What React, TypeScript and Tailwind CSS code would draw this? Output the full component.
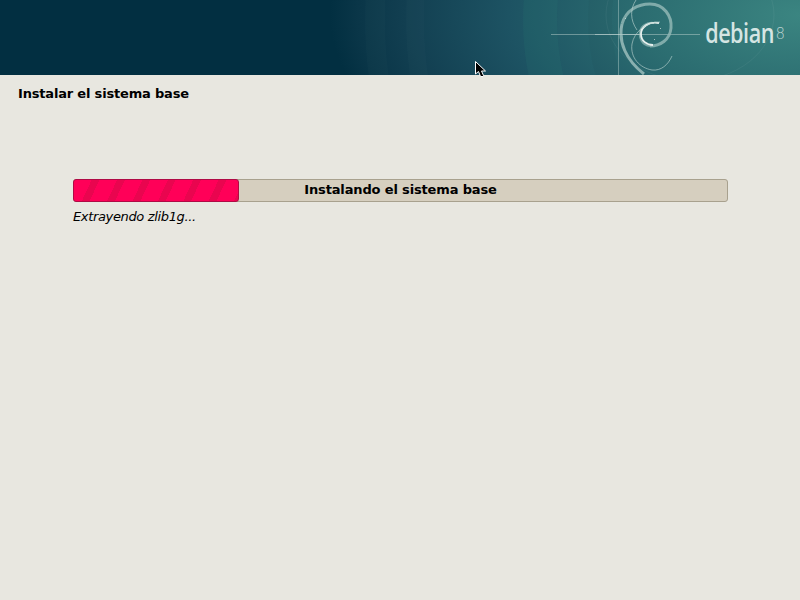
import React from 'react';

const BannerArt = () => (
  <svg className="absolute inset-0 w-[800px] h-[75px]" viewBox="0 0 800 75" fill="none">
    {/* faint rings behind the swirl */}
    <circle cx="800" cy="20" r="425" stroke="#ffffff" strokeOpacity="0.015" strokeWidth="20" />
    <circle cx="800" cy="20" r="385" stroke="#ffffff" strokeOpacity="0.015" strokeWidth="18" />
    <circle cx="800" cy="20" r="260" stroke="#2f8f80" strokeOpacity="0.1" strokeWidth="34" />
    <circle cx="800" cy="20" r="200" stroke="#000000" strokeOpacity="0.025" strokeWidth="24" />
    <ellipse cx="690" cy="15" rx="84" ry="66" stroke="#ffffff" strokeOpacity="0.05" />
    {/* crosshair */}
    <path d="M551 34.5H700" stroke="#c9dcd8" strokeOpacity="0.45" />
    <path d="M595 34.5H640" stroke="#e4eeeb" strokeOpacity="0.4" />
    <path d="M618.5 0V75" stroke="#c9dcd8" strokeOpacity="0.4" />
    {/* swirl */}
    <path d="M622 24C626 10 638 4 650 4C664 4 672 16 671 28C670 40 660 46 650 46" stroke="#8fb6b4" strokeOpacity="0.85" strokeWidth="3" />
    <path d="M622 24C618 42 626 60 644 74" stroke="#a9c8c5" strokeOpacity="0.75" strokeWidth="3" />
    <path d="M650 46C642 45 639 38 640 32C641 26 647 22 654 23" stroke="#a9c8c5" strokeOpacity="0.6" strokeWidth="2" />
    <path d="M659 23C649 21 641 27 641 34C641 41 647 45 653 45" stroke="#e8f1ee" strokeWidth="1.8" />
    <path d="M636 0C630 9 630 20 637 30" stroke="#b5cfcc" strokeOpacity="0.65" />
    <path d="M660 22C646 22 634 32 632 44C630 58 640 68 652 70C661 71 668 65 672 56" stroke="#b5cfcc" strokeOpacity="0.65" />
    <path d="M660 28L661 29M654 39L655 40M625 18L626 19" stroke="#d8e6e3" strokeOpacity="0.7" />
  </svg>
);

const Cursor = () => (
  <svg className="absolute left-[475px] top-[61px]" width="12" height="17" viewBox="0 0 12 17">
    <path d="M0.5 0.5V13L3.5 10.5L5.5 15.5H8L8.5 14.5L6.5 10H10.5Z" fill="#000000" stroke="#ffffff" />
  </svg>
);

export default function App() {
  return (
    <div className="relative w-[800px] h-[600px] overflow-hidden bg-[#e8e7e0] font-['DejaVu_Sans',sans-serif] text-[13px] text-black">
      <header className="relative h-[75px] flex justify-end bg-[radial-gradient(ellipse_470px_230px_at_800px_15px,#3b8581_0%,#2b6c70_35%,#1d5363_62%,#123f51_84%,#0a3648_94%,#022f41_100%)]">
        <BannerArt />
        <div className="relative flex items-start pt-[17px] pr-[15px] text-[#d5e5e3]">
          <span className="origin-right scale-x-[0.8] -mr-[1px] font-['Open_Sans','DejaVu_Sans',sans-serif] font-semibold text-[27px] leading-[32px] tracking-[-0.6px]">debian</span>
          <span className="ml-[3px] mt-[8px] text-[15px] leading-[18px] font-light text-[#b9d2d0]">8</span>
        </div>
      </header>

      <h1 className="pl-[18px] pt-[10px] font-bold leading-[17px] tracking-[-0.18px]">Instalar el sistema base</h1>

      <div className="mt-[77px] ml-[73px] w-[655px]">
        <div className="relative h-[23px] rounded-[3px] border border-[#a8a18e] bg-[#d6cfbf]">
          <div className="absolute -left-px -top-px h-[23px] w-[166px] rounded-[3px] border border-[#b00a45] bg-[repeating-linear-gradient(115deg,#ff0058_0,#ff0058_16px,#e9054f_16px,#e9054f_23px)]" />
          <div className="relative text-center font-bold leading-[19px] tracking-[-0.15px]">Instalando el sistema base</div>
        </div>
        <p className="mt-[6px] italic leading-[17px] tracking-[-0.35px]">Extrayendo zlib1g...</p>
      </div>

      <Cursor />
    </div>
  );
}
